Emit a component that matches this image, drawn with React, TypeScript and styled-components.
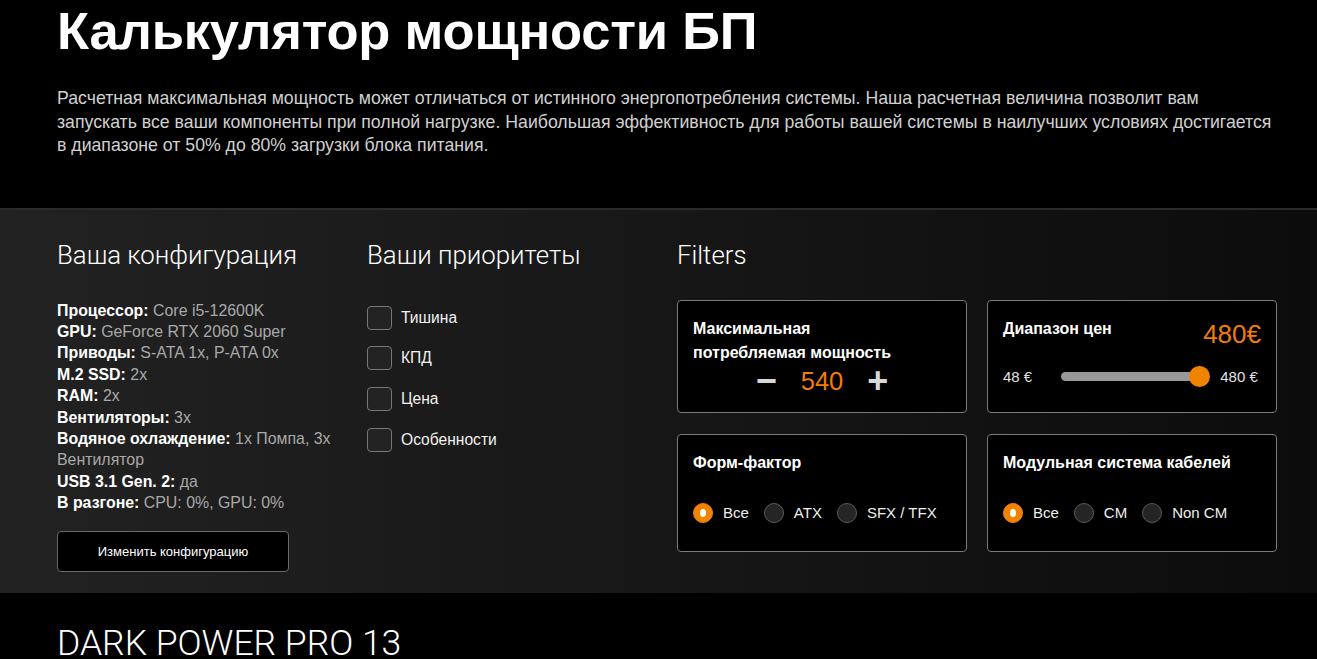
import React from "react";
import styled, { createGlobalStyle } from "styled-components";

const Global = createGlobalStyle`
  html, body { margin: 0; padding: 0; background: #000; }
  body { font-family: "Liberation Sans", Arial, sans-serif; color: #fff; }
  * { box-sizing: border-box; }
`;

const Page = styled.div`
  width: 1317px;
  background: #000;
  overflow: hidden;
`;

const Container = styled.div`
  width: 1220px;
  margin-left: 57px;
`;

const Header = styled.header`
  padding: 2px 0 50px;
`;

const Title = styled.h1`
  margin: 0;
  font-family: "Liberation Sans", Arial, sans-serif;
  font-weight: 700;
  font-size: 52.5px;
  line-height: 58px;
  letter-spacing: -0.2px;
  color: #fff;
`;

const Lead = styled.p`
  margin: 27px 0 0;
  font-size: 17.7px;
  line-height: 23.5px;
  color: #d0d0d0;
  max-width: 1220px;
`;

const Configurator = styled.section`
  border-top: 2px solid #2b2b2b;
  background: linear-gradient(90deg, #222 0%, #181818 45%, #0c0c0c 100%);
  padding: 29px 0 21px;
`;

const Grid = styled.div`
  display: grid;
  grid-template-columns: 290px 290px 290px 290px;
  column-gap: 20px;
`;

const Column = styled.div<{ $span?: number }>`
  grid-column: span ${(p) => p.$span ?? 1};
`;

const SectionTitle = styled.h2`
  margin: 0;
  font-family: Roboto, "Liberation Sans", sans-serif;
  font-weight: 300;
  font-size: 25.8px;
  line-height: 32px;
  color: #fff;
`;

const SpecList = styled.ul`
  list-style: none;
  margin: 29px 0 0;
  padding: 0;
  width: 290px;
`;

const Spec = styled.li`
  font-size: 15.9px;
  line-height: 21.4px;
  color: #a9a9a9;
`;

const SpecLabel = styled.b`
  color: #fff;
  font-weight: 700;
`;

const OutlineButton = styled.button`
  margin-top: 17px;
  width: 232px;
  height: 41px;
  background: #000;
  border: 1px solid #6a6a6a;
  border-radius: 4px;
  color: #fff;
  font-family: "Liberation Sans", Arial, sans-serif;
  font-size: 13px;
  cursor: pointer;
`;

const CheckList = styled.div`
  margin-top: 35px;
  display: flex;
  flex-direction: column;
  gap: 16.7px;
`;

const CheckRow = styled.label`
  display: flex;
  align-items: center;
  gap: 9px;
  font-size: 15.6px;
  color: #f0f0f0;
`;

const Box = styled.span`
  width: 25px;
  height: 24px;
  border: 1px solid #777;
  border-radius: 4px;
  background: #232323;
`;

const Cards = styled.div`
  margin-top: 29px;
  display: grid;
  grid-template-columns: 290px 290px;
  column-gap: 20px;
  row-gap: 21px;
`;

const Card = styled.div<{ $h: number }>`
  height: ${(p) => p.$h}px;
  background: #000;
  border: 1px solid #7a7a7a;
  border-radius: 4px;
  padding: 16px 15px 0;
`;

const CardHead = styled.div`
  display: flex;
  justify-content: space-between;
  align-items: flex-start;
`;

const CardTitle = styled.div`
  font-size: 16px;
  font-weight: 700;
  line-height: 24px;
  color: #fff;
`;

const BigOrange = styled.span`
  color: #f07d0a;
  font-size: 26px;
  line-height: 32px;
  margin-top: 1px;
`;

const Stepper = styled.div`
  display: flex;
  justify-content: center;
  align-items: center;
  gap: 24px;
  margin-top: 1px;
  height: 30px;
`;

const StepBtn = styled.span`
  color: #d8d8d8;
  font-size: 36px;
  font-weight: 700;
  line-height: 30px;
`;

const StepValue = styled.span`
  color: #f07d0a;
  font-size: 25.5px;
  line-height: 30px;
`;

const SliderRow = styled.div`
  display: flex;
  align-items: center;
  margin-top: 16px;
  height: 22px;
  font-size: 15px;
  color: #e0e0e0;
`;

const Track = styled.div`
  position: relative;
  flex: 0 0 139px;
  height: 9px;
  margin: 0 20px 0 29px;
  border-radius: 5px;
  background: #999;
`;

const Thumb = styled.span`
  position: absolute;
  right: -10px;
  top: -6px;
  width: 21px;
  height: 21px;
  border-radius: 50%;
  background: #f08400;
`;

const RadioRow = styled.div`
  display: flex;
  align-items: center;
  margin-top: 28px;
  gap: 15px;
  font-size: 15px;
  color: #eee;
`;

const RadioOption = styled.label`
  display: flex;
  align-items: center;
  gap: 10px;
`;

const Radio = styled.span<{ $on?: boolean }>`
  width: 20px;
  height: 20px;
  border-radius: 50%;
  display: flex;
  align-items: center;
  justify-content: center;
  background: ${(p) => (p.$on ? "#f08400" : "#252525")};
  border: 1px solid ${(p) => (p.$on ? "#f08400" : "#5a5a5a")};
  &::after {
    content: "";
    display: ${(p) => (p.$on ? "block" : "none")};
    width: 6px;
    height: 8px;
    border-radius: 50%;
    background: #fff;
  }
`;

const Product = styled.section`
  padding: 30px 0 0;
`;

const ProductTitle = styled.h2`
  margin: 0;
  font-family: Roboto, "Liberation Sans", sans-serif;
  font-weight: 300;
  font-size: 35.5px;
  line-height: 40px;
  color: #fff;
`;

const specs: [string, string][] = [
  ["Процессор:", "Core i5-12600K"],
  ["GPU:", "GeForce RTX 2060 Super"],
  ["Приводы:", "S-ATA 1x, P-ATA 0x"],
  ["M.2 SSD:", "2x"],
  ["RAM:", "2x"],
  ["Вентиляторы:", "3x"],
  ["Водяное охлаждение:", "1x Помпа, 3x Вентилятор"],
  ["USB 3.1 Gen. 2:", "да"],
  ["В разгоне:", "CPU: 0%, GPU: 0%"],
];

const priorities = ["Тишина", "КПД", "Цена", "Особенности"];

function RadioGroup({ options }: { options: string[] }) {
  return (
    <RadioRow>
      {options.map((o, i) => (
        <RadioOption key={o}>
          <Radio $on={i === 0} />
          {o}
        </RadioOption>
      ))}
    </RadioRow>
  );
}

export default function App() {
  return (
    <Page>
      <Global />
      <Header>
        <Container>
          <Title>Калькулятор мощности БП</Title>
          <Lead>
            Расчетная максимальная мощность может отличаться от истинного энергопотребления системы. Наша
            расчетная величина позволит вам запускать все ваши компоненты при полной нагрузке. Наибольшая
            эффективность для работы вашей системы в наилучших условиях достигается в диапазоне от 50% до 80%
            загрузки блока питания.
          </Lead>
        </Container>
      </Header>
      <Configurator>
        <Container>
          <Grid>
            <Column>
              <SectionTitle>Ваша конфигурация</SectionTitle>
              <SpecList>
                {specs.map(([l, v]) => (
                  <Spec key={l}>
                    <SpecLabel>{l}</SpecLabel> {v}
                  </Spec>
                ))}
              </SpecList>
              <OutlineButton>Изменить конфигурацию</OutlineButton>
            </Column>
            <Column>
              <SectionTitle>Ваши приоритеты</SectionTitle>
              <CheckList>
                {priorities.map((p) => (
                  <CheckRow key={p}>
                    <Box />
                    {p}
                  </CheckRow>
                ))}
              </CheckList>
            </Column>
            <Column $span={2}>
              <SectionTitle>Filters</SectionTitle>
              <Cards>
                <Card $h={113}>
                  <CardTitle>
                    Максимальная
                    <br />
                    потребляемая мощность
                  </CardTitle>
                  <Stepper>
                    <StepBtn>−</StepBtn>
                    <StepValue>540</StepValue>
                    <StepBtn>+</StepBtn>
                  </Stepper>
                </Card>
                <Card $h={113}>
                  <CardHead>
                    <CardTitle>Диапазон цен</CardTitle>
                    <BigOrange>480€</BigOrange>
                  </CardHead>
                  <SliderRow>
                    48 €
                    <Track>
                      <Thumb />
                    </Track>
                    480 €
                  </SliderRow>
                </Card>
                <Card $h={118}>
                  <CardTitle>Форм-фактор</CardTitle>
                  <RadioGroup options={["Все", "ATX", "SFX / TFX"]} />
                </Card>
                <Card $h={118}>
                  <CardTitle>Модульная система кабелей</CardTitle>
                  <RadioGroup options={["Все", "CM", "Non CM"]} />
                </Card>
              </Cards>
            </Column>
          </Grid>
        </Container>
      </Configurator>
      <Product>
        <Container>
          <ProductTitle>DARK POWER PRO 13</ProductTitle>
        </Container>
      </Product>
    </Page>
  );
}
